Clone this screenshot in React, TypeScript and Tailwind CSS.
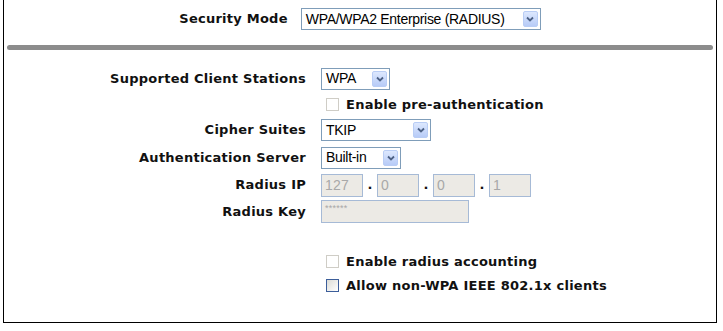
import React from 'react';

const Chevron: React.FC = () => (
  <span className="flex h-[16px] w-[15px] items-center justify-center rounded-[2px] border border-[#b9cdf5] bg-gradient-to-b from-[#dde8fe] to-[#b7cbf7]">
    <svg width="8" height="6" viewBox="0 0 8 6">
      <path d="M1 1.5 L4 4.5 L7 1.5" fill="none" stroke="#4d6185" strokeWidth="1.8" />
    </svg>
  </span>
);

const Select: React.FC<{ value: string; width: string }> = ({ value, width }) => (
  <div
    className={`flex h-[22px] ${width} items-center justify-between border border-[#7f9db9] bg-white pl-[4px] pr-[2px] text-[14px] text-black`}
    style={{ fontFamily: '"Liberation Sans", Arial, sans-serif' }}
  >
    <span className="tracking-[-0.3px]">{value}</span>
    <Chevron />
  </div>
);

const Box: React.FC<{ value: string; width: string; small?: boolean }> = ({ value, width, small }) => (
  <div
    className={`flex h-[23px] ${width} border border-[#a6bad6] bg-[#eceae5] pl-[3px] text-[#a8a8a8] ${
      small ? 'items-start pt-[1px] text-[9px]' : 'items-center text-[14px]'
    }`}
    style={{ fontFamily: '"Liberation Sans", Arial, sans-serif' }}
  >
    {value}
  </div>
);

const Check: React.FC<{ label: string; blue?: boolean }> = ({ label, blue }) => (
  <div className="flex items-center gap-[7px] pl-[5px]">
    <span
      className={`h-[13px] w-[13px] border ${
        blue ? 'border-[#3c5e9a] bg-gradient-to-br from-[#dcdcd6] to-white' : 'border-[#cfcdc6] bg-white'
      }`}
    />
    <span className="font-bold">{label}</span>
  </div>
);

const Row: React.FC<{ label?: string; h: string; children: React.ReactNode }> = ({ label, h, children }) => (
  <div className={`flex ${h} items-center`}>
    <div className="w-[302px] text-right font-bold">{label}</div>
    <div className="ml-[15px] flex items-center">{children}</div>
  </div>
);

export default function App() {
  return (
    <div
      className="h-[331px] w-[723px] bg-white text-[13px] tracking-[0.25px] text-[#111]"
      style={{ fontFamily: '"DejaVu Sans", Verdana, sans-serif' }}
    >
      <div className="ml-[3px] h-[323px] w-[714px] border-x border-b border-black">
        <div className="flex items-center justify-center gap-[13px] pt-[8px]">
          <span className="font-bold">Security Mode</span>
          <Select value="WPA/WPA2 Enterprise (RADIUS)" width="w-[240px]" />
        </div>
        <div className="mx-[3px] mt-[15px] h-[5px] rounded-full bg-[#8c8c8c]" />

        <div className="mt-[17px] flex flex-col">
          <Row label="Supported Client Stations" h="h-[23px]">
            <Select value="WPA" width="w-[69px]" />
          </Row>
          <Row h="h-[29px]">
            <Check label="Enable pre-authentication" />
          </Row>
          <Row label="Cipher Suites" h="h-[22px]">
            <Select value="TKIP" width="w-[110px]" />
          </Row>
          <Row label="Authentication Server" h="h-[33px]">
            <Select value="Built-in" width="w-[80px]" />
          </Row>
          <Row label="Radius IP" h="h-[22px]">
            <div className="flex items-center">
              <Box value="127" width="w-[42px]" />
              <span className="w-[14px] text-center font-bold">.</span>
              <Box value="0" width="w-[42px]" />
              <span className="w-[14px] text-center font-bold">.</span>
              <Box value="0" width="w-[42px]" />
              <span className="w-[14px] text-center font-bold">.</span>
              <Box value="1" width="w-[42px]" />
            </div>
          </Row>
          <Row label="Radius Key" h="h-[31px]">
            <Box value="******" width="w-[148px]" small />
          </Row>
          <div className="h-[22px]" />
          <Row h="h-[25px]">
            <Check label="Enable radius accounting" />
          </Row>
          <Row h="h-[23px]">
            <Check label="Allow non-WPA IEEE 802.1x clients" blue />
          </Row>
        </div>
      </div>
    </div>
  );
}
